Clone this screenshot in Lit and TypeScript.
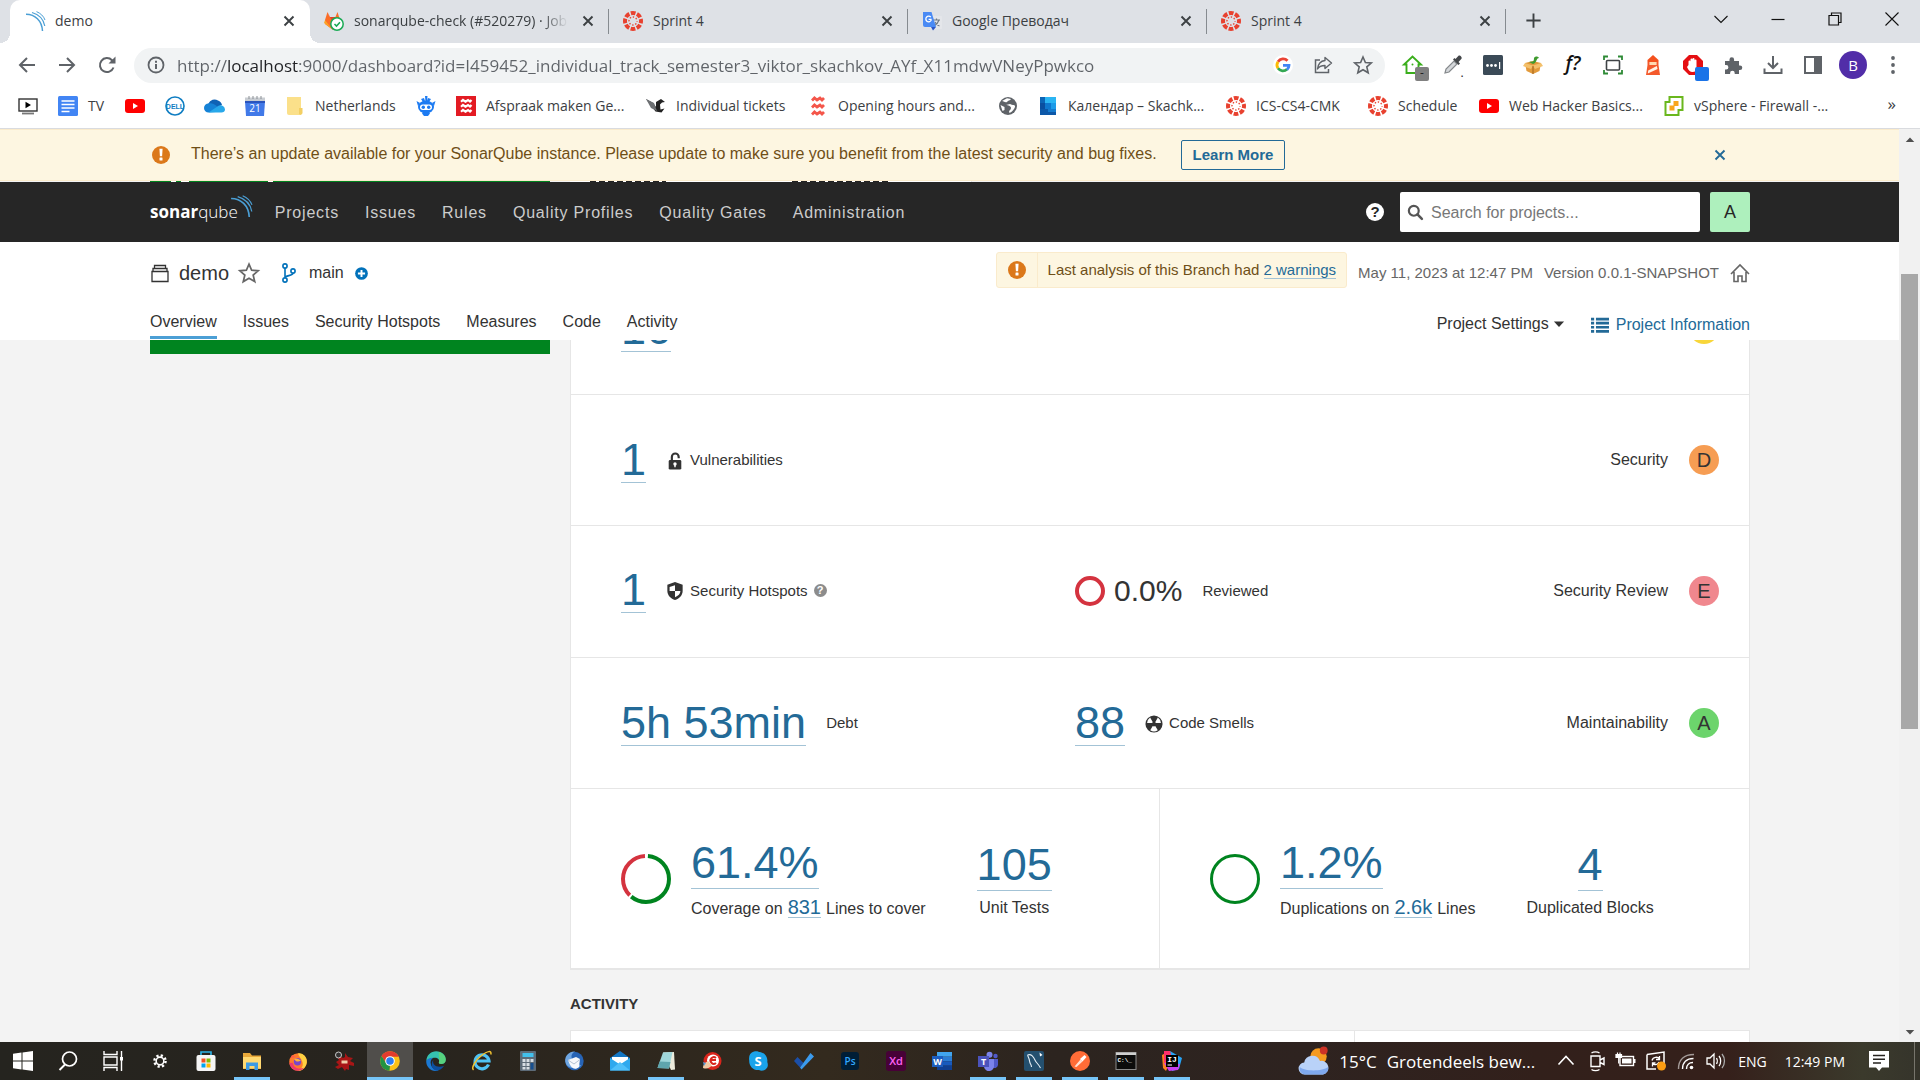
import { LitElement, html, svg, css, nothing } from "lit";
import type { TemplateResult } from "lit";
import { customElement, property } from "lit/decorators.js";
import { classMap } from "lit/directives/class-map.js";

const canvasMark = svg`<circle cx="10" cy="10" r="8" fill="none" stroke="#e8412f" stroke-width="4" stroke-dasharray="4.7 1.58" stroke-dashoffset="2.4"/>
  <circle cx="10" cy="10" r="4" fill="none" stroke="#e8412f" stroke-width="1.4" stroke-dasharray="1.4 1.74" stroke-dashoffset=".7"/>`;

const tube = svg`<rect x="0" y="3" width="20" height="14" rx="3" fill="#f00"/><path d="M8 7l5 3-5 3z" fill="#fff"/>`;

const alertMark = svg`<circle cx="10" cy="10" r="9" fill="#db781a"/><path d="M8.4 3.8h3.2l-.5 7.4H8.9z" fill="#fff"/><rect x="8.5" y="12.6" width="3" height="3" rx=".5" fill="#fff"/>`;

const waves = svg`<g fill="none" stroke="#4b9fd5"><path d="M1 3.2C10 3.2 17 9.5 17.5 20" stroke-width="1.5"/><path d="M7 1.5C14 3.5 18.500 8 19.8 15" stroke-width="1.2"/><path d="M11.5.6C15.5 2.3 18.6 5 20 9" stroke-width="1"/></g>`;

/* Every icon is drawn on a 20 by 20 grid. */
const ICONS: Record<string, TemplateResult> = {
  canvas: canvasMark,
  tube,
  alert: alertMark,
  waves,
  gitlab: svg`<path d="M1 9L3.5 1l2 5h6l2-5L16 9l1 4-8 6-8-6z" fill="#fc6d26"/><path d="M3.5 1l2 5h6l2-5L9 12z" fill="#e24329"/><path d="M1 9l-1 3 8 6z" fill="#fca326"/><circle cx="13" cy="13" r="6.2" fill="#fff" stroke="#1aaa55" stroke-width="1.5"/><path d="M10.5 13l2 2 3.5-3.7" fill="none" stroke="#1aaa55" stroke-width="1.6"/>`,
  translate: svg`<rect x="8" y="5" width="12" height="13" rx="1" fill="#e4e6ea"/><path d="M11 9h7M14.5 7.5V9M17 9c-1 3-3 5-5 6M13 11c1 2 3 3.5 4.5 4" fill="none" stroke="#6f7a86" stroke-width="1.2"/><path d="M1 1h8.5L14 16H3a2 2 0 0 1-2-2z" fill="#4a8af4"/><path d="M9 16h5l-3 3.5z" fill="#2a56c6"/><path d="M8.8 6.2A2.8 2.8 0 1 0 9 9.5V8.4H6.6" fill="none" stroke="#fff" stroke-width="1.3"/>`,
  close: svg`<path d="M5.5 5.5l9 9M14.5 5.5l-9 9" fill="none" stroke="currentColor" stroke-width="1.9"/>`,
  plus: svg`<path d="M10 2.5v15M2.5 10h15" stroke="currentColor" stroke-width="2"/>`,
  chevDown: svg`<path d="M3.5 7l6.5 6.5L16.5 7" fill="none" stroke="currentColor" stroke-width="1.1"/>`,
  winMin: svg`<path d="M3.5 10.5h13" stroke="currentColor" stroke-width="1.2"/>`,
  winMax: svg`<path d="M4 6.5h9.5V16H4zM6.5 6.5V4H16v9.5h-2.5" fill="none" stroke="currentColor" stroke-width="1.2"/>`,
  winClose: svg`<path d="M3.5 3.5l13 13M16.5 3.5l-13 13" stroke="currentColor" stroke-width="1.1"/>`,
  back: svg`<path d="M18 10H3M10 3l-7 7 7 7" fill="none" stroke="currentColor" stroke-width="2"/>`,
  forward: svg`<path d="M2 10h15M10 3l7 7-7 7" fill="none" stroke="currentColor" stroke-width="2"/>`,
  reload: svg`<path d="M16.5 12.5A7 7 0 1 1 15 5.2l1.5 1.5" fill="none" stroke="currentColor" stroke-width="2"/><path d="M18.5 1.5v7h-7z" fill="currentColor"/>`,
  info: svg`<circle cx="10" cy="10" r="7.5" fill="none" stroke="currentColor" stroke-width="1.8"/><path d="M10 9v5M10 5.8v2" stroke="currentColor" stroke-width="2"/>`,
  google: svg`<circle cx="10" cy="10" r="10" fill="#fff"/><g fill="none" stroke-width="2.8"><path d="M14.5 5.8A6 6 0 0 0 5 6.7" stroke="#ea4335"/><path d="M5 6.7a6 6 0 0 0 0 6.6" stroke="#fbbc05"/><path d="M5 13.3a6 6 0 0 0 9 .9" stroke="#34a853"/><path d="M14 14.7a6 6 0 0 0 2-4.3h-6" stroke="#4285f4"/></g>`,
  share: svg`<path d="M7 5H2.5v12.5h13V14" fill="none" stroke="currentColor" stroke-width="1.5"/><path d="M12 2.5l6.5 5.5-6.5 5.5v-3c-4 0-6 1-7.5 3.5C5 9.5 7.5 6 12 5.5z" fill="none" stroke="currentColor" stroke-width="1.4" stroke-linejoin="round"/>`,
  star: svg`<path d="M10 2l2.4 5.5 5.9.5-4.5 3.9 1.4 5.9L10 14.7l-5.2 3.1 1.4-5.9L1.7 8l5.9-.5z" fill="none" stroke="currentColor" stroke-width="1.6"/>`,
  house: svg`<path d="M3.5 18V9.5H1L9.5 1.5 18 9.5h-2.5V18z" fill="#fff" stroke="#3aae1c" stroke-width="1.9"/><circle cx="9.5" cy="9.5" r="1" fill="#3aae1c"/>`,
  picker: svg`<path d="M2 18l1-4 8-8 3 3-8 8z" fill="#d4d7da" stroke="#85898c" stroke-width="1.2"/><path d="M10 4.5l5.5 5.5 1.5-1.5-1.5-1.5 3-3.2c1-1.5-1.5-4-3-3L12.5 4 11.5 3z" fill="#434649"/>`,
  pass: svg`<rect width="20" height="20" rx="1.5" fill="#3b4a57"/><g fill="#fff"><circle cx="4.5" cy="10.5" r="1.4"/><circle cx="8.5" cy="10.5" r="1.4"/><circle cx="12.5" cy="10.5" r="1.4"/><rect x="16" y="7" width="1.2" height="7"/></g>`,
  parcel: svg`<path d="M2 8l8-2 8 2-1.5 8L10 19l-6.500-3z" fill="#e29a3b"/><path d="M2 8l8 2.5L18 8l2 3-8 3-2-3-2 3-8-3z" fill="#f3c06b"/><path d="M6 7c3-1 5 1 5-4 1-2 4-2 5 0-3 0-2 5-6 6z" fill="#3f9b2f"/><path d="M10 11v8" stroke="#a1621a"/>`,
  frame: svg`<rect x="3.5" y="5.5" width="13" height="9.5" rx="1" fill="#fff" stroke="#3f4346" stroke-width="1.6"/><path d="M1 5V1.5h4M15 1.5h4V5M19 15v3.5h-4M5 18.5H1V15" fill="none" stroke="#2d8a35" stroke-width="1.8"/>`,
  lighthouse: svg`<path d="M4.500 5L10 0l5.500 5v2h-11z" fill="#f4511e"/><rect x="6.5" y="7" width="7" height="4" fill="#ffd9b0"/><path d="M4.500 7h2v3h7V7h2v3l1.500 10H3l1.500-10z" fill="#f4592b"/><path d="M5.2 15.5l8.600-4.500.8 3-9.800 4.500z" fill="#fff3e6"/>`,
  adblock: svg`<path d="M6 0h8l6 6v8l-6 6H6l-6-6V6z" fill="#e50f12"/><path d="M5.5 10V6.5a1 1 0 0 1 2 0V9 4.500a1 1 0 0 1 2 0V9 4a1 1 0 0 1 2 0v5-3.500a1 1 0 0 1 2 0V13c0 3-1.500 4-4 4s-4-1.500-5.500-5z" fill="#fff"/>`,
  puzzle: svg`<path d="M2 6h4.500V4.500a2.300 2.300 0 0 1 4.600 0V6H16v4.500h1a2.300 2.300 0 0 1 0 4.600h-1V19h-4.300v-1a2.300 2.300 0 0 0-4.600 0v1H2v-4.500h1.200a2.200 2.200 0 0 0 0-4.400H2z" fill="currentColor"/>`,
  download: svg`<path d="M10 1v11M5 8l5 5 5-5M1.5 13.5v4.5h17v-4.5" fill="none" stroke="currentColor" stroke-width="2"/>`,
  panel: svg`<rect x="2" y="2" width="16" height="16" fill="none" stroke="currentColor" stroke-width="2"/><rect x="11" y="2" width="7" height="16" fill="currentColor"/>`,
  kebab: svg`<g fill="currentColor"><circle cx="10" cy="3" r="1.9"/><circle cx="10" cy="10" r="1.9"/><circle cx="10" cy="17" r="1.9"/></g>`,
  play: svg`<rect x="1" y="3" width="18" height="12" fill="#fff" stroke="#333" stroke-width="1.4"/><path d="M7.5 5.8l5.5 3.2-5.5 3.2z" fill="#000"/><path d="M4 17.5h12" stroke="#777" stroke-width="1.8"/>`,
  doc: svg`<rect x="0" width="20" height="20" rx="1.5" fill="#4285f4"/><path d="M3.5 5h13M3.5 8.5h13M3.5 12h13M3.5 15.5h8" stroke="#fff" stroke-width="1.7"/>`,
  dell: svg`<circle cx="10" cy="10" r="9" fill="#fff" stroke="#0f7dc2" stroke-width="1.6"/><text x="10" y="12.5" text-anchor="middle" font-family="Liberation Sans, sans-serif" font-weight="700" font-size="7" fill="#0f7dc2">DELL</text>`,
  cloud: svg`<path d="M3.500 15A5 5 0 0 1 3.500 7.500 6.500 6.500 0 0 1 13 4.500a6 6 0 0 1 4 4.500z" fill="#0f62b5"/><path d="M3.500 16.500a4.500 4.500 0 0 1 0-9c3-1 5.500.5 7.500 2l7 6z" fill="#1582d6"/><path d="M3.500 16.500L14 9.500a4.500 4.500 0 0 1 6 4c0 2-1.500 3-3.500 3z" fill="#28a8ea"/>`,
  cal: svg`<path d="M0 5h20l-1 15H1z" fill="#4179e8"/><rect y="1.5" width="20" height="4.5" fill="#c9cdd2"/><path d="M4 0v3M8 0v3M12 0v3M16 0v3" stroke="#8a8f95"/><path d="M0 5h20v2H0z" fill="#2a54bd"/><text x="10" y="15.5" text-anchor="middle" font-family="Open Sans, sans-serif" font-size="10" fill="#fff">21</text>`,
  folder: svg`<path d="M2 1h14v18H4a2 2 0 0 1-2-2z" fill="#fbe08a"/><path d="M14 12h3.5v5a2 2 0 0 1-3.5 1z" fill="#f3cf63"/>`,
  robot: svg`<ellipse cx="10" cy="11" rx="8" ry="6.5" fill="#1d7bf2"/><rect x="4" y="8.500" width="12" height="5.500" rx="2.700" fill="#fff"/><circle cx="7.3" cy="11.2" r="1.7" fill="#1d7bf2"/><circle cx="12.7" cy="11.2" r="1.7" fill="#1d7bf2"/><path d="M6 17.500l1-1h6l1 1-2 2.500H8zM9 0h2.500L11 6H9.500zM.5 5L4 7 2 10zM19.5 5L16 7l2 3zM5 3l3-1 1 3-2 1zM15 3l-3-1-1 3 2 1z" fill="#1d7bf2"/>`,
  wavesRed: svg`<rect width="20" height="20" fill="#e31b23"/><path d="M5 5.800l2-1.800 2.500 1.600L12 4l2 1.600L15.500 4M5 10.800L7 9l2.500 1.600L12 9l2 1.600L15.500 9M5 15.800L7 14l2.500 1.600L12 14l2 1.600 1.500-1.600" fill="none" stroke="#fff" stroke-width="2.200"/>`,
  wavesPlain: svg`<path d="M4 4.5l2.5-2.5 2.5 2 3-2 2 2L16 2M4 11.5L6.5 9l2.500 2 3-2 2 2L16 9M4 18.500L6.500 16l2.500 2 3-2 2 2 2-2" fill="none" stroke="#f4564a" stroke-width="2.8"/>`,
  bird: svg`<path d="M0 3l7 4 3 4v-5l5-3 4 3-3 .5-2 2 .5 5 4-1-3 4-6-1z" fill="#222"/><path d="M0 3l8 4 3 8-6-3z" fill="#6d7073"/>`,
  globe: svg`<circle cx="10" cy="10" r="9" fill="#5f6368"/><path d="M4 5c2 0 3 2 5 1 1-2 3-1 4-3l-4-.8zM8 9c2 0 5 1 5 3s-2 2-2 4 3 0 5-3 1-4-1-4-2-1-3-1zM2.5 9l4 2v3l-2 1z" fill="#fff"/>`,
  outlook: svg`<rect x="2" y="1" width="16" height="18" fill="#1d9be8"/><path d="M2 1h5v6H2z" fill="#0c65b6"/><path d="M7 1h11v6H7z" fill="#2bb5f3"/><path d="M2 7h5v6H2z" fill="#0a4fa0"/><path d="M7 7h6v6H7z" fill="#0f78cf"/><path d="M2 13h16v6H2z" fill="#0d58a8"/><path d="M10 13h8v3h-8z" fill="#147bcf"/>`,
  vsphere: svg`<path d="M5.5 1h13v13h-4v5h-13V6h4z" fill="#fff" stroke="#6ab71d" stroke-width="2"/><rect x="9.5" y="5" width="5" height="5" fill="#f8a51b"/><rect x="5.5" y="9.5" width="5" height="5" fill="#f8a51b"/>`,
  search: svg`<circle cx="8" cy="8" r="5.8" fill="none" stroke="currentColor" stroke-width="2.6"/><path d="M12.3 12.3l5.2 5.2" stroke="currentColor" stroke-width="3" stroke-linecap="round"/>`,
  project: svg`<path d="M2 8.500h16v10H2zM3 8.500V5.500h14v3M4.500 5.500v-3h11v3" fill="none" stroke="#333" stroke-width="1.3"/>`,
  branch: svg`<g fill="none" stroke="#0171ba" stroke-width="1.6"><circle cx="6" cy="3" r="2.1"/><circle cx="6" cy="17" r="2.1"/><circle cx="14" cy="8" r="2.1"/><path d="M6 5.200v9.600M14 10.200c0 2.800-8 2-8 4.500"/></g>`,
  plusCircle: svg`<circle cx="10" cy="10" r="9.8" fill="#0171ba"/><path d="M10 4.500v11M4.500 10h11" stroke="#fff" stroke-width="3"/>`,
  home: svg`<path d="M1 11l9-9 9 9M4 9v9.500h4V13h4v5.500h4V9" fill="none" stroke="currentColor" stroke-width="1.6"/>`,
  list: svg`<path d="M0 3.500h3.500M5.500 3.500H20M0 8h3.500M5.500 8H20M0 12.500h3.500M5.500 12.500H20M0 17h3.500M5.500 17H20" stroke="currentColor" stroke-width="3"/>`,
  caret: svg`<path d="M1.500 6h17L10 15z" fill="currentColor"/>`,
  lock: svg`<path d="M6.500 9V5.500a3.800 3.800 0 0 1 7.600 0V7" fill="none" stroke="#333" stroke-width="2.400"/><rect x="3" y="9" width="14" height="10.500" rx="1.5" fill="#333"/><circle cx="10" cy="13.3" r="1.900" fill="#fff"/><path d="M9.200 13h1.600v4H9.200z" fill="#fff"/>`,
  shield: svg`<path d="M10 0l8.500 3v7c0 5-4 8.500-8.500 10-4.500-1.500-8.500-5-8.500-10V3z" fill="#333"/><path d="M10 3.500V10H4V5.500zM10 10h6c0 3-2.500 5.500-6 7z" fill="#fff"/>`,
  smell: svg`<circle cx="10" cy="10" r="9.5" fill="#333"/><g fill="#fff"><path d="M8.700 8L5.700 2.800A8 8 0 0 0 2.300 9h5.400zM11.300 8l3-5.200A8 8 0 0 1 17.700 9h-5.400zM8.600 12.300L5.800 17a8 8 0 0 0 8.400 0l-2.800-4.700a3 3 0 0 1-2.800 0z"/></g>`,
  windows: svg`<path d="M0 2.800l8.500-1.200v8H0zM9.500 1.400L20 0v9.600H9.500zM0 10.500h8.500v8L0 17.300zM9.500 10.500H20V20L9.500 18.600z" fill="#fff"/>`,
  wsearch: svg`<circle cx="11.5" cy="8" r="7" fill="none" stroke="#fff" stroke-width="1.7"/><path d="M7 13.500L1.500 19" stroke="#fff" stroke-width="2"/>`,
  taskview: svg`<path d="M1 0v3.500h13V0M1 20v-3.500h13V20M1 6h13v8H1zM18.500 0v20" fill="none" stroke="#fff" stroke-width="1.4"/><rect x="17" y="6" width="3" height="3.5" fill="#fff"/>`,
  gear: svg`<circle cx="10" cy="10" r="4.8" fill="none" stroke="#fff" stroke-width="2"/><circle cx="10" cy="10" r="7" fill="none" stroke="#fff" stroke-width="3" stroke-dasharray="2.800 2.700"/>`,
  store: svg`<path d="M5 4V1h10v3" fill="none" stroke="#2cb3e8" stroke-width="1.6"/><rect x=".5" y="4" width="19" height="16" rx="2" fill="#f5f5f5"/><path d="M5.500 7.500H9.500v4h-4z" fill="#f25022"/><path d="M10.500 7.500h4v4h-4z" fill="#7fba00"/><path d="M5.500 12.500h4v4h-4z" fill="#00a4ef"/><path d="M10.500 12.500h4v4h-4z" fill="#ffb900"/>`,
  explorer: svg`<path d="M1 2h7l2 2.500h9V18H1z" fill="#e9a93a"/><path d="M1 6h18v11.500H1z" fill="#ffd972"/><path d="M4 19v-7.500h12V19h-3.500v-4h-5v4z" fill="#3d9be5"/>`,
  firefox: svg`<circle cx="10" cy="11" r="8.8" fill="#ff7a2d"/><path d="M10 2.500c5-1 9.500 4 8.800 9S14 20 10 19.800C14 18 16 14 14 10c-1-3-3-4-4-7.500z" fill="#ffd042"/><path d="M2 7c1 0 1-1 2-3 2 1 3 2 5 2z" fill="#ff5b4a"/><path d="M1.300 12A8.800 8.800 0 0 0 10 19.800c2 0 5-1 6-3-5 2-11 0-11-5z" fill="#ef3a6b"/><circle cx="9.5" cy="10.8" r="3.7" fill="#7b46c9"/><path d="M6 8c3-1 5 0 7 2-3 0-4 2-7-2z" fill="#ffb43b"/>`,
  dragon: svg`<path d="M2 4l4 1 3 2 2-1 0-4 3 4 5 1-3 3 4 2 0 3-5-1 0 5-3-1-1 2-3-4-4 2-3-2 4-2-3-3 3-2z" fill="#a81616"/><circle cx="4.5" cy="4" r="3" fill="#333" stroke="#c8c8c8"/><path d="M7.500 9.500h6v3h-6z" fill="#f0cfa8"/>`,
  chrome: svg`<circle cx="10" cy="10" r="9.8" fill="#fbc116"/><path d="M1.500 5.100a9.800 9.800 0 0 1 17 0L18.700 5.700H10L6 12.300z" fill="#e33b2e"/><path d="M1.500 5.100L6.200 12.300 10 14.500l-.5 5.300A9.800 9.800 0 0 1 1.500 5.100z" fill="#229342"/><circle cx="10" cy="10" r="4.8" fill="#fff"/><circle cx="10" cy="10" r="3.8" fill="#2c7df0"/>`,
  edge: svg`<path d="M.3 10C.5 4 5 .2 10.200.2 16 .2 19.800 4 19.800 8.500c0 3-2 4.500-4.500 4.500-2 0-3-1-2.300-2 .8-2-1-4.300-3.800-4.300C5 6.700 1.500 9 .3 10z" fill="#35c1b1"/><path d="M13 1c5 1.500 7 5 6.800 8-.3 3-2.800 4-4.800 4-2 0-2.500-1-2-2 1-3-1-8 0-10z" fill="#66d868" opacity=".7"/><path d="M.2 10C1.500 7.800 4 6.700 7 6.700c-2 1.500-3 4-2 7 1 3.500 4.500 5.500 8 5.300-6 3-13-2-12.800-9z" fill="#1b78d2"/><path d="M7.500 8.500c-2 5 3 9 10.500 6.500-2 3-5 4.500-8 4.500-4-1-6-6.500-2.500-11z" fill="#0d4f9e"/>`,
  ie: svg`<path d="M16.500 13.500A7 7 0 1 1 17 10H5" fill="none" stroke="#4fc3f5" stroke-width="3.2"/><path d="M1.500 19c-2.500-2 2-10 8-14.500S20-1 18.800 3.500" fill="none" stroke="#f4c430" stroke-width="1.5"/>`,
  calc: svg`<rect x="2" width="16" height="20" rx="1" fill="#5d6b78"/><rect x="4.5" y="2" width="11" height="4" fill="#42c0ec"/><path d="M4.500 8h3v3h-3zM8.500 8h3v3h-3zM12.500 8h3v3h-3zM4.500 12h3v3h-3zM8.500 12h3v3h-3zM4.500 16h3v2.500h-3zM8.500 16h3v2.500h-3z" fill="#d7dde3"/><path d="M12.500 12h3v6.500h-3z" fill="#174f8f"/>`,
  thunder: svg`<circle cx="10.5" cy="10" r="9.200" fill="#2764b6"/><path d="M2 13C-1 6 5 0 11 .5c-5 2-4 8-1 10l7 4c-3 4-12 4-15-1.500z" fill="#6fa6e2"/><path d="M4 9l8-3 4 2-1 8c-4 3.500-8 2-11-7z" fill="#f6f8fb"/><path d="M4 9l6 4L16 8.500" fill="none" stroke="#b5c2d2"/>`,
  mail: svg`<path d="M0 7l10-7 10 7v12H0z" fill="#1276c4"/><path d="M2 6h16v7H2z" fill="#fff"/><path d="M0 7l10 6.500L20 7v12.500H0z" fill="#2fa9ee"/><path d="M0 19.500L10 11l10 8.500z" fill="#4fc0fa"/>`,
  notepad: svg`<path d="M7 1.500l11-.5 1 17.500-4 .5z" fill="#ecebdc"/><path d="M7 1.500L16.500 1 13 17.500 1.500 17z" fill="#9fd6da"/><path d="M1.500 17l11.500.5L14.500 11 3.500 10.500z" fill="#5fa5ad"/>`,
  ccleaner: svg`<circle cx="10.5" cy="10" r="9" fill="#d9251c"/><circle cx="11" cy="9.5" r="6" fill="#fff"/><path d="M14 7a3.300 3.300 0 1 0 0 5M9 9h5" fill="none" stroke="#d9251c" stroke-width="2"/><path d="M1 17c0-4 3-6 5-7l4 4c-2 3-5 4.500-9 3z" fill="#f3c9a3"/><path d="M1 11l3 1-2 3z" fill="#5f9ed6"/>`,
  skype: svg`<path d="M6 .5c3-1 5 .3 6 .5 5 1 8 5 7.300 10 1 3 .7 5-1.300 7s-5 2-7 1C5 19.500 1 15 1.200 9.500.5 5 2 1.500 6 .5z" fill="#1aa3ea"/><text x="10.2" y="15" text-anchor="middle" font-family="Open Sans, sans-serif" font-weight="700" font-size="13" fill="#fff">S</text>`,
  todo: svg`<path d="M0 10l3.500-4 6 6-3.500 4.500z" fill="#1b4fa8"/><path d="M6 16.500L16.500 2 20 5.500 7.500 18.500z" fill="#3b9bee"/>`,
  ps: svg`<rect x="1" y="1" width="18" height="18" rx="3" fill="#001e36"/><text x="10" y="13.8" text-anchor="middle" font-family="Open Sans, sans-serif" font-weight="600" font-size="10" fill="#31a8ff">Ps</text>`,
  xd: svg`<rect width="20" height="20" rx="3" fill="#470137"/><text x="10" y="14" text-anchor="middle" font-family="Open Sans, sans-serif" font-weight="600" font-size="11" fill="#ff61f6">Xd</text>`,
  word: svg`<path d="M5 1h15v4.700H5z" fill="#41a5ee"/><path d="M5 5.700h15v4.500H5z" fill="#2b7cd3"/><path d="M5 10.200h15v4.500H5z" fill="#185abd"/><path d="M5 14.700h15V19H5z" fill="#103f91"/><rect y="5" width="11" height="11" fill="#1c5dbf"/><text x="5.5" y="13.8" text-anchor="middle" font-family="Open Sans, sans-serif" font-weight="700" font-size="9" fill="#fff">W</text>`,
  teams: svg`<circle cx="11.5" cy="3.7" r="3" fill="#7b83eb"/><circle cx="17.5" cy="5" r="2.2" fill="#5059c9"/><path d="M13 8h7v6a3.500 3.500 0 0 1-6 2z" fill="#5059c9"/><path d="M6 8h10v6a5 5 0 0 1-10 2z" fill="#7b83eb"/><rect y="5" width="11" height="11" fill="#4b53bc"/><text x="5.5" y="13.8" text-anchor="middle" font-family="Open Sans, sans-serif" font-weight="700" font-size="9" fill="#fff">T</text>`,
  mysql: svg`<rect width="20" height="20" rx="2" fill="#24506f"/><path d="M3.500 4c4-1.500 6 2 8 6 1 2 3 3 5 7M3.500 4c1.500 3 2 5 2.500 8 .5 1 1.500 2 1.500 4" fill="none" stroke="#e7eff5" stroke-width="1.1"/><path d="M15.500 1.500l3 2.500-2.500 1.500z" fill="#fff"/>`,
  postman: svg`<circle cx="10" cy="10" r="10" fill="#ff6c37"/><path d="M4.500 15.500l6-7 2 2-6 5.500z" fill="#ffe2d6"/><path d="M10 8l4.500-4 2 2-4 4.500z" fill="#fff"/>`,
  cmd: svg`<rect y="1.5" width="20" height="17" fill="#0c0c0c" stroke="#8a8a8a"/><path d="M0 1.500h20v2.500H0z" fill="#cfcfcf"/><text x="1.5" y="11" font-family="Liberation Mono, monospace" font-weight="700" font-size="6" fill="#fff">C:\\_</text>`,
  idea: svg`<path d="M0 4l7-4 4 5-7 15-3-3z" fill="#fc801d"/><path d="M8 0l12 7-3 11-7 2z" fill="#27a3f5"/><path d="M2 12l5 8 9-1 2-6z" fill="#c93ff0"/><path d="M2 0h6l2 8-8 4z" fill="#fe2f6b"/><rect x="4" y="4" width="12" height="12" fill="#000"/><text x="5.2" y="11" font-family="Liberation Mono, monospace" font-weight="700" font-size="8" fill="#fff">IJ</text><path d="M5.500 14h4.500" stroke="#fff"/>`,
  weather: svg`<circle cx="13" cy="7" r="5.5" fill="#f59a1f"/><circle cx="16.5" cy="3" r="2.6" fill="#cc3226"/><path d="M4 19a4 4 0 0 1-.5-8A5.500 5.500 0 0 1 14 10a4.500 4.500 0 0 1 2 9z" fill="#b9d2f8"/><path d="M4 19a4 4 0 0 1-3.500-5c3 3 15 3 19 0a4.500 4.500 0 0 1-3.500 5z" fill="#7fa9ee"/>`,
  up: svg`<path d="M2.500 13.500L10 5.500l7.500 8" fill="none" stroke="#fff" stroke-width="1.6"/>`,
  meet: svg`<path d="M5 5h9v10.500H5zM14 9l4-2v6.500l-4-2" fill="none" stroke="#fff" stroke-width="1.4"/><path d="M5.500 2c2-1.500 6-1.500 8 0M5.500 18.500c2 1.500 6 1.500 8 0" fill="none" stroke="#fff" stroke-width="1.3"/>`,
  battery: svg`<rect x="4" y="5.5" width="13.5" height="9" fill="none" stroke="#fff" stroke-width="1.4"/><rect x="6" y="7.5" width="9.5" height="5" fill="#fff"/><path d="M18.700 8v4" stroke="#fff" stroke-width="1.6"/><path d="M0 3.500h5.500v3H0zM1.500 1.500v2M4 1.500v2M2.700 6.500v6" stroke="#fff" stroke-width="1.2" fill="#fff"/>`,
  update: svg`<path d="M1 3.500l17-2.500v12M1 3.500V18l9 0" fill="none" stroke="#fff" stroke-width="1.5"/><path d="M6 9.500c1-4 6-4 7.500-1.500M13.500 5v3.500H10M13 11c-1 3-5 3.500-6.500 1.500M6.500 15.500V12h3" fill="none" stroke="#fff" stroke-width="1.3"/><circle cx="15.5" cy="15" r="4.5" fill="#fb9d13"/>`,
  wifi: svg`<circle cx="15.5" cy="16.5" r="1.8" fill="#fff"/><g fill="none" stroke="#fff" stroke-width="1.4"><path d="M10.500 18c0-4 2.500-6.500 6.500-6.500"/><path d="M6.500 18c0-6.500 4-10.500 11-10.500"/><path d="M2.500 18C2.500 9 8 3.500 18 3.500" opacity=".55"/></g>`,
  volume: svg`<path d="M1 7h3l4-4v14l-4-4H1z" fill="none" stroke="#fff" stroke-width="1.3"/><path d="M10.500 7c1 1.500 1 4.500 0 6M13 5c2.200 2.500 2.200 7.500 0 10" fill="none" stroke="#fff" stroke-width="1.3"/><path d="M16 3c3.300 4 3.300 10 0 14" fill="none" stroke="#aaa" stroke-width="1.3"/>`,
  notice: svg`<path d="M0 0h20v16.500h-7L10 20l-3-3.500H0z" fill="#fff"/><path d="M4 4.500h12M4 8.200h12M4 12h8" stroke="#26231f" stroke-width="1.4"/>`,
};

const icon = (name: string, size = 20) =>
  html`<svg class="icon" width=${size} height=${size} viewBox="0 0 20 20" aria-hidden="true">${ICONS[name]}</svg>`;

const base = css`
  * { box-sizing: border-box; }
  .icon { display: block; flex: none; overflow: visible; }
  button { font: inherit; color: inherit; border: 0; background: none; padding: 0; margin: 0; display: flex; align-items: center; justify-content: center; cursor: pointer; }
  a { color: inherit; text-decoration: none; }
`;

@customElement("browser-chrome")
class BrowserChrome extends LitElement {
  static styles = [base, css`
    :host { display: block; flex: none; font-family: "Open Sans", "Noto Sans", sans-serif; color: #3c4043; background: #fff; border-bottom: 1px solid #d9dbdf; }
    .strip { display: flex; align-items: center; height: 43px; background: #dee1e6; padding-left: 10px; }
    .tab { display: flex; align-items: center; flex: 0 1 299px; min-width: 0; height: 43px; padding: 0 11px 2px 14px; gap: 10px; font-size: 14px; position: relative; }
    .tab.active { background: #fff; border-radius: 10px 10px 0 0; flex-basis: 300px; padding-left: 15px; }
    .tab.active::before, .tab.active::after { content: ""; position: absolute; bottom: 0; width: 10px; height: 10px; }
    .tab.active::before { left: -10px; background: radial-gradient(circle at 0 0, transparent 10px, #fff 10px); }
    .tab.active::after { right: -10px; background: radial-gradient(circle at 100% 0, transparent 10px, #fff 10px); }
    .rule { width: 1px; height: 25px; background: #868b90; position: absolute; right: 0; top: 9px; }
    .title { flex: 1; min-width: 0; overflow: hidden; white-space: nowrap; }
    .title.long { -webkit-mask-image: linear-gradient(to right, #000 88%, transparent); mask-image: linear-gradient(to right, #000 88%, transparent); }
    .new { width: 54px; height: 41px; align-self: flex-start; }
    .win { display: flex; margin-left: auto; color: #111; height: 38px; align-self: flex-start; }
    .win button { width: 57px; }
    .bar { display: flex; align-items: center; height: 44px; padding: 0 17px; color: #5f6368; }
    .navs { display: flex; gap: 20px; padding-right: 17px; }
    .omni { flex: 1; display: flex; align-items: center; height: 35px; border-radius: 18px; background: #f1f3f4; padding: 0 12px; gap: 20px; }
    .omni input { flex: 1; min-width: 0; border: 0; outline: none; font: inherit; font-size: 17px; padding: 0; margin-left: -9px; color: transparent; background: linear-gradient(90deg, #5f6368 50px, #202124 50px, #202124 121px, #5f6368 121px); -webkit-background-clip: text; background-clip: text; }
    .exts { display: flex; gap: 20px; padding-left: 18px; }
    .exts button { width: 20px; height: 28px; position: relative; }
    .badge { position: absolute; right: -6px; bottom: -2px; width: 14px; height: 14px; border-radius: 2px; background: #808080; color: #222; font-size: 12px; line-height: 12px; text-align: center; }
    .badge.blue { background: #1a73e8; }
    .badge.dot { background: none; }
    .exts .fx { font: italic 600 19px "Open Sans", sans-serif; color: #111; padding-bottom: 4px; }
    .me { width: 28px; height: 28px; flex: none; margin: 0 -4px; border-radius: 14px; background: #512da8; color: #fff; font-size: 15px; display: flex; align-items: center; justify-content: center; }
    .marks { display: flex; align-items: center; height: 41px; padding: 0 18px 4px; gap: 20px; font-size: 14px; white-space: nowrap; color: #3c4043; }
    .marks a { display: flex; align-items: center; gap: 10px; flex: none; }
    .more { margin: 0 6px 4px auto; font-size: 17px; }
  `];

  tabs = [
    { title: "demo", mark: "waves" },
    { title: "sonarqube-check (#520279) · Jobs", mark: "gitlab" },
    { title: "Sprint 4", mark: "canvas" },
    { title: "Google Преводач", mark: "translate" },
    { title: "Sprint 4", mark: "canvas" },
  ];

  marks: Array<[string, string, number]> = [
    ["play", "", 0], ["doc", "TV", 17], ["tube", "", 0], ["dell", "", 0], ["cloud", "", 0], ["cal", "", 0],
    ["folder", "Netherlands", 81], ["robot", "", 0], ["wavesRed", "Afspraak maken Ge...", 140], ["bird", "Individual tickets", 112],
    ["wavesPlain", "Opening hours and...", 140], ["globe", "", 0], ["outlook", "Календар – Skachk...", 138],
    ["canvas", "ICS-CS4-CMK", 92], ["canvas", "Schedule", 61], ["tube", "Web Hacker Basics...", 135], ["vsphere", "vSphere - Firewall -...", 139],
  ];

  render() {
    return html`
      <div class="strip">
        ${this.tabs.map((t, i) => html`
          <div class=${classMap({ tab: true, active: i === 0 })}>
            ${icon(t.mark)}
            <span class=${classMap({ title: true, long: i === 1 })}>${t.title}</span>
            <button aria-label="Close tab">${icon("close")}</button>
            ${i ? html`<span class="rule"></span>` : nothing}
          </div>`)}
        <button class="new" aria-label="New tab">${icon("plus", 19)}</button>
        <div class="win">
          <button aria-label="Search tabs">${icon("chevDown")}</button>
          <button aria-label="Minimise">${icon("winMin")}</button>
          <button aria-label="Restore">${icon("winMax")}</button>
          <button aria-label="Close">${icon("winClose")}</button>
        </div>
      </div>
      <div class="bar">
        <div class="navs">
          <button aria-label="Back">${icon("back")}</button>
          <button aria-label="Forward">${icon("forward")}</button>
          <button aria-label="Reload">${icon("reload")}</button>
        </div>
        <div class="omni">
          ${icon("info")}
          <input aria-label="Address" .value=${"http://localhost:9000/dashboard?id=I459452_individual_track_semester3_viktor_skachkov_AYf_X11mdwVNeyPpwkco"} />
          ${icon("google")}
          <button aria-label="Share">${icon("share")}</button>
          <button aria-label="Bookmark">${icon("star")}</button>
        </div>
        <div class="exts">
          <button aria-label="House">${icon("house")}<span class="badge">-</span></button>
          <button aria-label="Colour picker">${icon("picker")}<span class="badge dot">.</span></button>
          <button aria-label="Passwords">${icon("pass")}</button>
          <button aria-label="Parcel">${icon("parcel")}</button>
          <button aria-label="Fonts" class="fx">f?</button>
          <button aria-label="Capture">${icon("frame")}</button>
          <button aria-label="Lighthouse">${icon("lighthouse")}</button>
          <button aria-label="Blocker">${icon("adblock")}<span class="badge blue"></span></button>
          <button aria-label="Extensions">${icon("puzzle")}</button>
          <button aria-label="Downloads">${icon("download")}</button>
          <button aria-label="Side panel">${icon("panel")}</button>
          <span class="me">B</span>
          <button aria-label="Menu">${icon("kebab")}</button>
        </div>
      </div>
      <nav class="marks">
        ${this.marks.map(([mark, label, w]) => html`<a href="#" aria-label=${label || mark}>${icon(mark)}${label ? html`<span style="width:${w}px">${label}</span>` : nothing}</a>`)}
        <span class="more">»</span>
      </nav>`;
  }
}

@customElement("rating-badge")
class RatingBadge extends LitElement {
  @property() grade = "A";
  static colours: Record<string, string> = { A: "#6cd46c", C: "#f8d63a", D: "#f69d53", E: "#f0878e" };
  static styles = [base, css`
    :host { display: block; flex: none; }
    .disc { display: flex; align-items: center; justify-content: center; width: 30px; height: 30px; border-radius: 15px; font-size: 20px; color: #333; }
  `];
  render() {
    return html`<span class="disc" style="background:${RatingBadge.colours[this.grade]}">${this.grade}</span>`;
  }
}

@customElement("sonar-page")
class SonarPage extends LitElement {
  static styles = [base, css`
    :host { display: flex; flex-direction: column; flex: 1; min-width: 0; overflow: hidden; font-family: "Liberation Sans", Arial, sans-serif; font-size: 16px; line-height: 20px; color: #333; background: #f3f3f3; }
    .wide { padding: 0 149px 0 150px; display: flex; align-items: center; flex: none; white-space: nowrap; }
    .banner { height: 52px; background: #fdf6e1; border-top: 1px solid #faebcc; border-bottom: 1px solid #faebcc; color: #6f4f17; }
    .banner .icon { margin: 0 20px 0 1px; }
    .banner .text { padding-bottom: 2px; }
    .learn { height: 30px; border: 1px solid #236a97; border-radius: 2px; color: #236a97; font-weight: 700; font-size: 15px; padding: 0 11px; margin-left: 24px; }
    .dismiss { margin-left: auto; margin-right: 20px; color: #236a97; }
    .dismiss .icon { margin: 0; }
    .peek { height: 1px; overflow: hidden; }
    .gate { width: 400px; height: 1px; background: linear-gradient(90deg, #00841f 21px, #fff 21px, #fff 26px, #00841f 26px, #00841f 31px, #fff 31px, #fff 39px, #00841f 39px, #00841f 118px, #fff 118px, #fff 123px, #00841f 123px); }
    .measure-tabs { display: flex; height: 1px; margin-left: 20px; padding-left: 20px; background: #fff; border-right: 1px solid #e6e6e6; width: 402px; }
    .measure-tabs i { height: 1px; background: repeating-linear-gradient(90deg, #222 0, #222 6px, #fff 6px, #fff 9px); }
    .measure-tabs .fresh { width: 76px; }
    .measure-tabs .total { width: 98px; margin-left: 126px; }
    .nav { height: 60px; background: #262626; color: #cccccc; }
    .logo { display: flex; align-items: center; color: #fff; font: 300 17px/20px "Open Sans", sans-serif; margin-right: 23px; }
    .logo b { font-weight: 700; }
    .logo .icon { margin: -12px 0 0 -8px; }
    .nav ul { display: flex; gap: 26px; list-style: none; padding: 2px 0 0; margin: 0; letter-spacing: 0.05em; }
    .tools { display: flex; align-items: center; margin-left: auto; gap: 10px; }
    .help { width: 18px; height: 18px; border-radius: 9px; background: #fff; color: #262626; font-weight: 700; font-size: 15px; line-height: 18px; margin-right: 6px; }
    .find { display: flex; align-items: center; gap: 7px; width: 300px; height: 40px; padding: 0 7px; background: #fff; border-radius: 2px; color: #555; }
    .find input { flex: 1; min-width: 0; border: 0; outline: 0; background: none; font: inherit; padding: 2px 0 0; color: #333; }
    .find input::placeholder { color: #777; opacity: 1; }
    .user { width: 40px; height: 40px; border-radius: 2px; background: #aef0bd; color: #262626; font-size: 18px; }
    .head { background: #fff; flex: none; height: 98px; display: flex; flex-direction: column; }
    .crumbs { height: 62px; }
    .name { font-size: 20px; margin: 0 9px; }
    .star { color: #666; }
    .branch { margin: 0 10px 0 19px; }
    .main { margin-right: 11px; }
    .warn { display: flex; align-items: center; margin: 0 11px 6px auto; height: 36px; font-size: 15px; color: #6f4f17; background: #fdf6e1; border: 1px solid #faebcc; border-radius: 3px; }
    .warn .cell { display: flex; align-items: center; height: 34px; padding: 0 10px; border-right: 1px solid #faebcc; }
    .warn .msg { padding: 0 10px; }
    .warn a, .sub a { color: #236a97; border-bottom: 1px solid #a3c3d6; }
    .when { color: #666; font-size: 15px; margin-right: 11px; }
    .tabs { height: 36px; align-items: flex-end; padding-bottom: 1px; }
    .tabs nav { display: flex; gap: 26px; }
    .tabs nav a { height: 27px; border-bottom: 3px solid transparent; }
    .tabs nav a.on { border-color: #4b9fd5; }
    .settings { display: flex; gap: 4px; margin: 0 26px 0 auto; height: 30px; align-items: center; }
    .pinfo { display: flex; align-items: center; gap: 7px; color: #236a97; height: 28px; }
    .body { flex: 1; min-height: 0; overflow: hidden; display: flex; gap: 20px; padding: 0 149px 0 150px; }
    .side { flex: 0 0 400px; }
    .side div { height: 14px; background: #00841f; }
    .content { flex: 1; min-width: 0; }
    .panel { background: #fff; border: 1px solid #e6e6e6; border-top: 0; }
    .clip { height: 55px; overflow: hidden; display: flex; flex-direction: column; justify-content: flex-end; }
    .row { flex: none; display: flex; align-items: center; height: 131px; padding: 0 30px 0 50px; border-bottom: 1px solid #e6e6e6; }
    .row.tall { height: 132px; padding-bottom: 2px; }
    .first { flex: 0 0 454px; }
    .first, .second { display: flex; align-items: center; font-size: 15px; }
    .big { display: block; width: max-content; font-size: 45px; line-height: 44px; color: #236a97; border-bottom: 1px solid #a3c3d6; margin-right: 20px; }
    .metric { display: flex; align-items: center; gap: 6px; }
    .metric .icon { margin-top: 1px; }
    .hint { width: 13px; height: 13px; border-radius: 7px; background: #8c8c8c; color: #fff; font-weight: 700; font-size: 11px; line-height: 13px; text-align: center; }
    .pct { font-size: 30px; line-height: 30px; margin: 0 20px 0 9px; }
    .grade { display: flex; align-items: center; gap: 21px; margin-left: auto; }
    .pair { display: grid; grid-template-columns: 1fr 1fr; height: 180px; border-bottom: 1px solid #e6e6e6; }
    .half { display: flex; align-items: center; padding-left: 50px; white-space: nowrap; }
    .half + .half { box-shadow: -1px 0 #e6e6e6; }
    .half .big { line-height: 50px; margin-right: 0; }
    .ring { margin-right: 20px; }
    .fig { display: flex; flex-direction: column; gap: 8px; }
    .fig.mid { align-items: center; gap: 7px; margin-left: 51px; }
    .sub { display: flex; align-items: baseline; gap: 5px; }
    .sub a { font-size: 20px; line-height: 20px; }
    h2 { margin: 24px 0 16px; font-size: 15px; line-height: 20px; text-transform: uppercase; }
    .act { border: 1px solid #e6e6e6; border-bottom: 0; background: #fff; height: 60px; display: grid; grid-template-columns: 783fr 395fr; }
    .act div + div { border-left: 1px solid #e6e6e6; }
  `];

  sections = ["Projects", "Issues", "Rules", "Quality Profiles", "Quality Gates", "Administration"];
  pages = ["Overview", "Issues", "Security Hotspots", "Measures", "Code", "Activity"];

  ring(size: number, width: number, colour: string, part = 0) {
    const r = (size - width) / 2;
    const len = 2 * Math.PI * r;
    const c = size / 2;
    return html`<svg class="icon" width=${size} height=${size} viewBox="0 0 ${size} ${size}" aria-hidden="true">
      <g fill="none" stroke-width=${width} transform="rotate(-90 ${c} ${c})">
        ${part
          ? svg`<circle cx=${c} cy=${c} r=${r} stroke=${colour} stroke-dasharray="${len * part - 3} ${len}" stroke-dashoffset="-2"/>
             <circle cx=${c} cy=${c} r=${r} stroke="#d4333f" stroke-dasharray="${len * (1 - part) - 3} ${len}" stroke-dashoffset=${-(len * part + 1)}/>`
          : svg`<circle cx=${c} cy=${c} r=${r} stroke=${colour}/>`}
      </g></svg>`;
  }

  grade(label: string, grade: string) {
    return html`<div class="grade"><span>${label}</span><rating-badge grade=${grade}></rating-badge></div>`;
  }

  render() {
    return html`
      <div class="wide banner">${icon("alert", 20)}
        <span class="text">There’s an update available for your SonarQube instance. Please update to make sure you benefit from the latest security and bug fixes.</span>
        <button class="learn">Learn More</button>
        <button class="dismiss" aria-label="Dismiss">${icon("close", 20)}</button>
      </div>
      <div class="wide peek"><div class="gate"></div><div class="measure-tabs"><i class="fresh"></i><i class="total"></i></div></div>
      <header class="wide nav">
        <a class="logo" href="#"><b>sonar</b>qube${icon("waves", 22)}</a>
        <ul>${this.sections.map((s) => html`<li><a href="#">${s}</a></li>`)}</ul>
        <div class="tools">
          <button class="help" aria-label="Help">?</button>
          <label class="find">${icon("search", 17)}<input type="search" aria-label="Search for projects" placeholder="Search for projects..." /></label>
          <button class="user">A</button>
        </div>
      </header>
      <div class="head">
        <div class="wide crumbs">
          ${icon("project", 20)}<span class="name">demo</span>
          <button class="star" aria-label="Favourite">${icon("star", 22)}</button>
          <span class="branch">${icon("branch", 20)}</span><span class="main">main</span>
          <button aria-label="Add branch">${icon("plusCircle", 13)}</button>
          <div class="warn"><span class="cell">${icon("alert", 20)}</span><span class="msg">Last analysis of this Branch had <a href="#">2 warnings</a></span></div>
          <span class="when">May 11, 2023 at 12:47 PM</span><span class="when">Version 0.0.1-SNAPSHOT</span>
          <button class="star" aria-label="Home page">${icon("home", 20)}</button>
        </div>
        <div class="wide tabs">
          <nav>${this.pages.map((p, i) => html`<a href="#" class=${classMap({ on: i === 0 })}>${p}</a>`)}</nav>
          <button class="settings">Project Settings ${icon("caret", 12)}</button>
          <a class="pinfo" href="#">${icon("list", 18)}Project Information</a>
        </div>
      </div>
      <div class="body">
        <div class="side"><div></div></div>
        <div class="content">
          <div class="panel">
            <div class="clip"><div class="row">
              <div class="first"><a class="big" href="#">16</a></div>${this.grade("", "C")}
            </div></div>
            <div class="row">
              <div class="first"><a class="big" href="#">1</a><span class="metric">${icon("lock", 18)}Vulnerabilities</span></div>
              ${this.grade("Security", "D")}
            </div>
            <div class="row tall">
              <div class="first"><a class="big" href="#">1</a><span class="metric">${icon("shield", 18)}Security Hotspots<span class="hint">?</span></span></div>
              <div class="second">${this.ring(30, 4, "#d4333f")}<span class="pct">0.0%</span>Reviewed</div>
              ${this.grade("Security Review", "E")}
            </div>
            <div class="row">
              <div class="first"><a class="big" href="#">5h 53min</a>Debt</div>
              <div class="second"><a class="big" href="#">88</a><span class="metric">${icon("smell", 18)}Code Smells</span></div>
              ${this.grade("Maintainability", "A")}
            </div>
            <div class="pair">
              <div class="half">
                <span class="ring">${this.ring(50, 4, "#00841f", 0.614)}</span>
                <div class="fig"><a class="big" href="#">61.4%</a><span class="sub"><span>Coverage on</span><a href="#">831</a><span>Lines to cover</span></span></div>
                <div class="fig mid"><a class="big" href="#">105</a><span>Unit Tests</span></div>
              </div>
              <div class="half">
                <span class="ring">${this.ring(50, 3, "#00841f")}</span>
                <div class="fig"><a class="big" href="#">1.2%</a><span class="sub"><span>Duplications on</span><a href="#">2.6k</a><span>Lines</span></span></div>
                <div class="fig mid"><a class="big" href="#">4</a><span>Duplicated Blocks</span></div>
              </div>
            </div>
          </div>
          <h2>Activity</h2>
          <div class="act"><div></div><div></div></div>
        </div>
      </div>`;
  }
}

@customElement("page-scrollbar")
class PageScrollbar extends LitElement {
  static styles = [base, css`
    :host { display: flex; flex-direction: column; flex: 0 0 21px; background: #f1f1f1; color: #505050; }
    .end { height: 21px; }
    .before { flex: 124; }
    .thumb { flex: 455; width: 17px; margin: 0 auto; background: #a8a8a8; }
    .after { flex: 292; }
    .flip { display: block; transform: rotate(180deg); }
  `];
  render() {
    return html`<button class="end" aria-label="Scroll up"><span class="flip">${icon("caret", 10)}</span></button>
      <span class="before"></span><span class="thumb"></span><span class="after"></span>
      <button class="end" aria-label="Scroll down">${icon("caret", 10)}</button>`;
  }
}

@customElement("task-bar")
class TaskBar extends LitElement {
  static styles = [base, css`
    :host { display: flex; align-items: stretch; flex: none; height: 38px; color: #fff; font-family: "Open Sans", "Noto Sans", sans-serif; font-size: 14px; white-space: nowrap; background: linear-gradient(90deg, #25241f, #28241e 22%, #332a1e 43%, #2c241f 55%, #2e2320 68%, #32201b 80%, #35201b 90%, #3b3a2c 97%, #35342b); }
    .sys { display: flex; padding-right: 2px; }
    .sys button { width: 45px; }
    .apps { display: flex; }
    .apps button { width: 46px; border-bottom: 3px solid transparent; padding-top: 3px; }
    .apps .run { width: 36px; margin: 0 5px; border-color: #76c5f8; }
    .apps .front { background: #504e4b; border-color: #76c5f8; }
    .tray { display: flex; align-items: center; margin-left: auto; }
    .temp { font-size: 17px; margin: 0 10px; }
    .sky { font-size: 17px; }
    .icons { display: flex; gap: 10px; margin-left: 21px; }
    .lang { margin: 0 18px 0 12px; }
    .note { margin: 0 25px 0 24px; }
    .edge { width: 6px; height: 38px; border-left: 1px solid #77756c; }
  `];
  apps: Array<[string, string]> = [
    ["gear", ""], ["store", ""], ["explorer", "run"], ["firefox", ""], ["dragon", ""], ["chrome", "front"], ["edge", ""], ["ie", ""],
    ["calc", ""], ["thunder", ""], ["mail", ""], ["notepad", "run"], ["ccleaner", ""], ["skype", ""], ["todo", ""], ["ps", ""], ["xd", ""],
    ["word", ""], ["teams", "run"], ["mysql", "run"], ["postman", "run"], ["cmd", "run"], ["idea", "run"],
  ];
  render() {
    return html`
      <div class="sys">
        <button aria-label="Start">${icon("windows")}</button>
        <button aria-label="Search">${icon("wsearch")}</button>
        <button aria-label="Task view">${icon("taskview")}</button>
      </div>
      <div class="apps">${this.apps.map(([n, s]) => html`<button class=${s} aria-label=${n}>${icon(n, n === "gear" ? 16 : 20)}</button>`)}</div>
      <div class="tray">
        ${icon("weather", 30)}<span class="temp">15°C</span><span class="sky">Grotendeels bew...</span>
        <span class="icons">${["up", "meet", "battery", "update", "wifi", "volume"].map((n) => icon(n))}</span>
        <span class="lang">ENG</span><span>12:49 PM</span>
        <span class="note">${icon("notice")}</span><span class="edge"></span>
      </div>`;
  }
}

@customElement("app-root")
class AppRoot extends LitElement {
  static styles = [base, css`
    :host { display: flex; flex-direction: column; height: 100vh; overflow: hidden; }
    .view { display: flex; flex: 1; min-height: 0; }
  `];
  render() {
    return html`<browser-chrome></browser-chrome>
      <main class="view"><sonar-page></sonar-page><page-scrollbar></page-scrollbar></main>
      <task-bar></task-bar>`;
  }
}
